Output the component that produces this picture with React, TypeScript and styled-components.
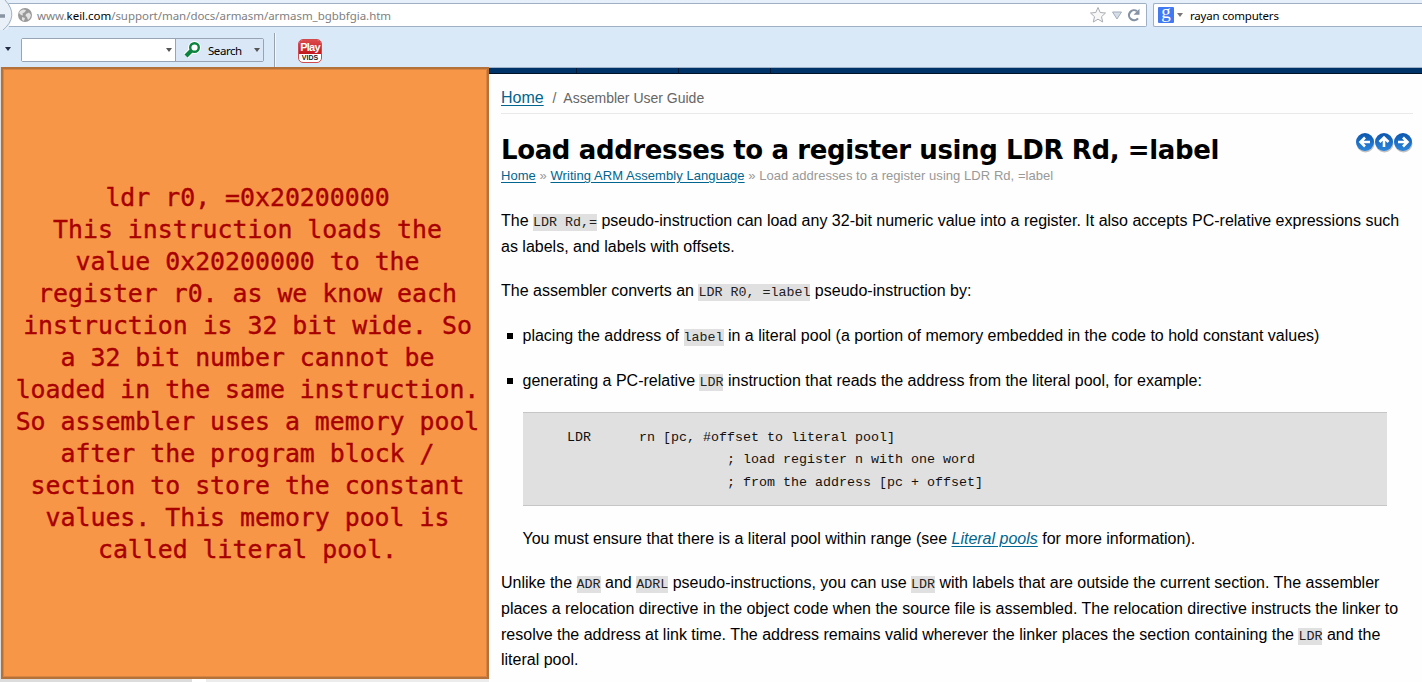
import React from "react";
import styled, { createGlobalStyle } from "styled-components";

const sans = `"Liberation Sans", Arial, sans-serif`;
const chromeFont = `"Noto Sans", "Open Sans", sans-serif`;
const mono = `"Liberation Mono", "Courier New", monospace`;

const Global = createGlobalStyle`
  * { box-sizing: border-box; }
  body { margin: 0; background: #fff; overflow: hidden; }
`;

const Page = styled.div`
  display: flex;
  flex-direction: column;
  width: 1422px;
  height: 682px;
  overflow: hidden;
  font-family: ${sans};
  background: #fefefe;
`;

/* ---------- browser chrome ---------- */
const NavBar = styled.div`
  display: flex;
  gap: 6px;
  height: 30px;
  padding-top: 3px;
  background: linear-gradient(#e6f0fb, #dae9f8);
  font: 11.5px/24px ${chromeFont};
`;
const UrlField = styled.div`
  display: flex;
  align-items: center;
  width: 1147px;
  height: 24px;
  background: #fff;
  border: 1px solid #9fb0c4;
  border-left: 0;
  border-radius: 0 2px 2px 0;
`;
const BackStub = styled.svg`
  flex: none;
  margin: -4px 4px 0 0;
  width: 14px;
  height: 32px;
  align-self: flex-start;
`;
const Url = styled.span`
  flex: 1;
  margin: 1px 0 0 5px;
  color: #808080;
  white-space: nowrap;
  letter-spacing: -0.04px;
  b { color: #000; font-weight: 400; }
`;
const UrlTools = styled.div`
  display: flex;
  align-items: center;
  gap: 5px;
  padding-right: 5px;
`;
const SearchField = styled.div`
  display: flex;
  align-items: center;
  flex: 1;
  height: 24px;
  padding-left: 4px;
  background: #fff;
  border: 1px solid #9fb0c4;
  border-right: 0;
  border-radius: 2px 0 0 2px;
  white-space: nowrap;
`;
const GoogleBadge = styled.span`
  width: 16px;
  height: 16px;
  border-radius: 1px;
  background: #4179f2;
  color: #fff;
  font: 19px/10px "Liberation Serif", serif;
  text-align: center;
`;
const Query = styled.span`
  margin: 1px 0 0 7px;
  color: #000;
  font-size: 11.5px;
  letter-spacing: -0.2px;
`;
const Caret = styled.span<{ $size?: number; $color?: string; $ml?: number }>`
  width: 0;
  height: 0;
  margin-left: ${(p) => p.$ml ?? 0}px;
  border: ${(p) => p.$size ?? 3}px solid transparent;
  border-top: ${(p) => (p.$size ?? 3) + 1}px solid ${(p) => p.$color ?? "#555"};
  border-bottom: 0;
`;
const ToolBar = styled.div`
  display: flex;
  height: 37px;
  padding-left: 5px;
  background: #dae9f8;
  font: 12px/22px ${chromeFont};
  & > ${Caret} { margin-top: 17px; }
`;
const SearchCombo = styled.div`
  display: flex;
  width: 243px;
  height: 24px;
  margin: 8px 0 0 10px;
  border: 1px solid #98a4b3;
  border-radius: 2px;
`;
const ComboInput = styled.div`
  display: flex;
  align-items: center;
  justify-content: flex-end;
  width: 154px;
  padding-right: 3px;
  background: #fff;
  border-right: 1px solid #98a4b3;
`;
const ComboButton = styled.div`
  display: flex;
  align-items: center;
  flex: 1;
  padding: 0 3px 0 8px;
  background: #d9e7f6;
  svg { margin-top: -2px; }
`;
const ButtonLabel = styled.span`
  margin: 2px auto 0 7px;
  font-size: 11.5px;
  letter-spacing: -0.45px;
`;
const Divider = styled.div`
  width: 2px;
  height: 34px;
  margin: 3px 0 0 10px;
  border-left: 1px solid #99a2ac;
  border-right: 1px solid #f4f8fc;
`;
const VidsLogo = styled.div`
  width: 24px;
  height: 24px;
  margin: 9px 0 0 22px;
  border: 1px solid #d14b4e;
  border-radius: 5px;
  overflow: hidden;
  background: #fff;
  text-align: center;
  font: bold 7px/8px ${sans};
  color: #222;
`;
const PlayLabel = styled.div`
  height: 14px;
  background: linear-gradient(#dc4a4c, #c2181d);
  color: #fff;
  font: bold 11px/14px ${sans};
  letter-spacing: -0.8px;
`;

/* ---------- page body ---------- */
const Body = styled.div`
  display: flex;
  flex: 1;
`;
const NoteColumn = styled.div`
  width: 489px;
  height: 615px;
  padding-left: 1px;
  background: linear-gradient(90deg, #dcdcdc 192px, #fff 192px, #fff 206px, #ececec 206px);
`;
const Note = styled.div`
  height: 612px;
  padding: 113px 0 0 5px;
  border: 2px solid #b5713a;
  box-shadow: inset 0 0 0 1px #d98440;
  background: #f79646;
  color: #a80000;
  text-align: center;
  font: 24.85px/32px "DejaVu Sans Mono", monospace;
  -webkit-text-stroke: 0.4px #a80000;
`;
const NoteLine = styled.div`
  margin: 0 -10px;
  white-space: nowrap;
`;
const Article = styled.div`
  flex: 1;
  min-width: 0;
  color: #000;
`;
const SiteStrip = styled.div`
  display: flex;
  height: 7px;
  background: #003468;
  border-top: 1px solid #9fb2c8;
  border-bottom: 1px solid #001226;
`;
const StripCell = styled.div<{ $w: number }>`
  width: ${(p) => p.$w}px;
  border-right: 1px solid #001a38;
`;
const Inner = styled.div`
  padding: 0 9px 0 12px;
`;
const Link = styled.a`
  color: #00658f;
  text-decoration: underline;
  text-underline-offset: 2px;
`;
const TopCrumb = styled.div`
  height: 40px;
  padding-top: 14px;
  border-bottom: 1px solid #e9e9e9;
  font-size: 14px;
  line-height: 20px;
  color: #666;
  white-space: pre;
  ${Link} { font-size: 16px; margin-right: 1px; }
`;
const TitleRow = styled.div`
  display: flex;
  justify-content: space-between;
  height: 51px;
  padding-top: 18px;
`;
const Title = styled.h1`
  margin: 1px 0 0;
  font: bold 26px/35px "DejaVu Sans", Verdana, sans-serif;
  letter-spacing: -0.38px;
  white-space: nowrap;
`;
const NavIcons = styled.svg`
  width: 58px;
  height: 22px;
`;
const Trail = styled.div`
  height: 20px;
  margin-top: 1px;
  font-size: 13px;
  line-height: 20px;
  letter-spacing: 0.05px;
  color: #999;
  white-space: nowrap;
`;
const Para = styled.p<{ $mt: number }>`
  margin: ${(p) => p.$mt}px 0 0;
  font-size: 16px;
  line-height: 25.6px;
  white-space: nowrap;
`;
const Code = styled.code`
  display: inline-block;
  height: 17px;
  margin-bottom: -5px;
  background: #e0e0e0;
  color: #222;
  font: 13.33px/17px ${mono};
`;
const List = styled.ul`
  margin: 0;
  padding: 0 0 0 21.5px;
  list-style: none;
`;
const Item = styled.li`
  display: flex;
  align-items: center;
  height: 26px;
  margin: 19px 0 0 -16px;
  font-size: 16px;
  white-space: pre;
  &::before {
    content: "";
    width: 6px;
    height: 6px;
    margin: 0 10px 0 0;
    background: #000;
  }
`;
const Pre = styled.pre`
  height: 94px;
  width: 864px;
  margin: 18px 0 0;
  padding: 14px 0 0 12.5px;
  border: 1px solid #c6c6c6;
  border-width: 1px 0;
  background: #e0e0e0;
  color: #111;
  font: 13.33px/22.7px ${mono};
`;

const noteLines = [
  "ldr r0, =0x20200000",
  "This instruction loads the",
  "value 0x20200000 to the",
  "register r0. as we know each",
  "instruction is 32 bit wide. So",
  "a 32 bit number cannot be",
  "loaded in the same instruction.",
  "So assembler uses a memory pool",
  "after the program block /",
  "section to store the constant",
  "values. This memory pool is",
  "called literal pool.",
];

const sample = `    LDR      rn [pc, #offset to literal pool]
                        ; load register n with one word
                        ; from the address [pc + offset]`;

const arrows = [
  { x: 10, angle: 180 },
  { x: 29, angle: -90 },
  { x: 48, angle: 0 },
];

export default function App() {
  return (
    <Page>
      <Global />
      <NavBar>
        <UrlField>
          <BackStub viewBox="0 0 14 32">
            <path d="M0 0H6Q18 15 6 31H0Z" fill="#e9f0f8" />
            <path d="M5 0Q20 16 2 31" fill="none" stroke="#9fb0c4" />
            <path d="M0 16H5" stroke="#8a95a3" strokeWidth="3.5" />
          </BackStub>
          <svg width="14" height="14" viewBox="0 0 14 14">
            <circle cx="7" cy="7" r="7" fill="#999" />
            <path d="M2 3L5 1.500L8 2L7 4L4.500 5.500L5 7.500L3 7L1 5ZM8 6L11 4.500L13 7L12 10L10 12L9 9L7.500 8ZM4 9L7 10L6 13L4 12Z" fill="#e2e2e2" />
          </svg>
          <Url>
            www.<b>keil.com</b>/support/man/docs/armasm/armasm_bgbbfgia.htm
          </Url>
          <UrlTools>
            <svg width="18" height="18" viewBox="0 0 18 18">
              <path d="M9 1.500L11.200 6.500L16.500 7L12.500 10.700L13.700 16L9 13.200L4.300 16L5.500 10.700L1.500 7L6.800 6.500Z" fill="#f8f8f8" stroke="#a9adb3" />
            </svg>
            <svg width="10" height="9" viewBox="0 0 10 9">
              <path d="M.5 1H9.500L5 8Z" fill="#d5dde6" stroke="#a3adba" />
            </svg>
            <svg width="14" height="14" viewBox="0 0 14 14">
              <path d="M11 10.300A5 5 0 1 1 10 3.200" fill="none" stroke="#8492a3" strokeWidth="2.200" />
              <path d="M12.500 .8V6.800H6.500Z" fill="#8492a3" />
            </svg>
          </UrlTools>
        </UrlField>
        <SearchField>
          <GoogleBadge>g</GoogleBadge>
          <Caret $ml={3} $color="#777" />
          <Query>rayan computers</Query>
        </SearchField>
      </NavBar>

      <ToolBar>
        <Caret $color="#222b44" />
        <SearchCombo>
          <ComboInput>
            <Caret />
          </ComboInput>
          <ComboButton>
            <svg width="17" height="17" viewBox="0 0 17 17">
              <path d="M7 10L2 15" stroke="#fff" strokeWidth="6.500" />
              <circle cx="10.500" cy="6.500" r="4.500" fill="#fff" stroke="#fff" strokeWidth="4" />
              <path d="M7 10L2 15" stroke="#0b8440" strokeWidth="4.200" />
              <circle cx="10.500" cy="6.500" r="4.300" fill="#fff" stroke="#0b8440" strokeWidth="2.400" />
            </svg>
            <ButtonLabel>Search</ButtonLabel>
            <Caret />
          </ComboButton>
        </SearchCombo>
        <Divider />
        <VidsLogo>
          <PlayLabel>Play</PlayLabel>
          VIDS
        </VidsLogo>
      </ToolBar>

      <Body>
        <NoteColumn>
          <Note>
            {noteLines.map((line) => (
              <NoteLine key={line}>{line}</NoteLine>
            ))}
          </Note>
        </NoteColumn>
        <Article>
          <SiteStrip>
            <StripCell $w={88} />
            <StripCell $w={102} />
            <StripCell $w={92} />
          </SiteStrip>
          <Inner>
            <TopCrumb>
              <Link>Home</Link>
              {"  /  Assembler User Guide"}
            </TopCrumb>
            <TitleRow>
              <Title>Load addresses to a register using LDR Rd, =label</Title>
              <NavIcons viewBox="0 0 58 22">
                <defs>
                  <linearGradient id="ball" x1="0" y1="0" x2="0" y2="1">
                    <stop offset="0" stopColor="#0c56ae" />
                    <stop offset="1" stopColor="#2b86dc" />
                  </linearGradient>
                </defs>
                {arrows.map((a) => (
                  <g key={a.x} transform={`translate(${a.x} 10)`}>
                    <circle cx="0.500" cy="1.500" r="9" fill="#a9a9a9" opacity="0.700" />
                    <circle r="9" fill="url(#ball)" />
                    <path d="M-5 0H4M0 -4.500L4.500 0L0 4.500" transform={`rotate(${a.angle})`} fill="none" stroke="#fff" strokeWidth="2.600" />
                  </g>
                ))}
              </NavIcons>
            </TitleRow>
            <Trail>
              <Link>Home</Link> » <Link>Writing ARM Assembly Language</Link> » Load addresses to a register using LDR Rd, =label
            </Trail>
            <Para $mt={22}>
              The <Code>LDR Rd,=</Code> pseudo-instruction can load any 32-bit numeric value into a register. It also accepts PC-relative expressions such
              <br />
              as labels, and labels with offsets.
            </Para>
            <Para $mt={19}>
              The assembler converts an <Code>LDR R0, =label</Code> pseudo-instruction by:
            </Para>
            <List>
              <Item>
                <span>placing the address of <Code>label</Code> in a literal pool (a portion of memory embedded in the code to hold constant values)</span>
              </Item>
              <Item>
                <span>generating a PC-relative <Code>LDR</Code> instruction that reads the address from the literal pool, for example:</span>
              </Item>
              <Pre>{sample}</Pre>
              <Para $mt={20}>
                You must ensure that there is a literal pool within range (see <Link><i>Literal pools</i></Link> for more information).
              </Para>
            </List>
            <Para $mt={19}>
              Unlike the <Code>ADR</Code> and <Code>ADRL</Code> pseudo-instructions, you can use <Code>LDR</Code> with labels that are outside the current section. The assembler
              <br />
              places a relocation directive in the object code when the source file is assembled. The relocation directive instructs the linker to
              <br />
              resolve the address at link time. The address remains valid wherever the linker places the section containing the <Code>LDR</Code> and the
              <br />
              literal pool.
            </Para>
          </Inner>
        </Article>
      </Body>
    </Page>
  );
}
